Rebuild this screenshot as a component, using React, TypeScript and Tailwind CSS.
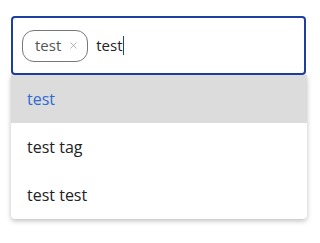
import { X } from "lucide-react";

const options = ["test", "test tag", "test test"];

export default function App() {
  return (
    <div className="min-h-[243px] bg-white pt-4 pl-[11px] font-['Open_Sans',sans-serif]">
      <div className="w-[295px]">
        <div className="flex h-[59px] items-center gap-[8px] rounded-[4px] border-2 border-[#1d3f9e] pl-[9px]">
          <span className="flex h-8 items-center gap-[7px] rounded-[12px] border border-[#777] pl-3 pr-[8px] text-[15px] text-[#555]">
            test
            <X className="h-[11px] w-[11px] text-[#999]" strokeWidth={1.6} />
          </span>
          <span className="flex items-center text-[15px] text-[#222]">
            test
            <span className="h-[19px] w-[1.5px] bg-[#1d3f9e]" />
          </span>
        </div>
        <ul className="w-[296px] overflow-hidden rounded-b-[4px] bg-white shadow-[0_2px_5px_rgba(0,0,0,0.25)]">
          {options.map((o, i) => (
            <li
              key={o}
              className={
                i === 0
                  ? "flex h-12 items-center bg-[#dcdcdc] pl-4 text-[16px] text-[#2f6ad0]"
                  : "flex h-12 items-center pl-4 text-[16px] text-[#222]"
              }
            >
              {o}
            </li>
          ))}
        </ul>
      </div>
    </div>
  );
}
